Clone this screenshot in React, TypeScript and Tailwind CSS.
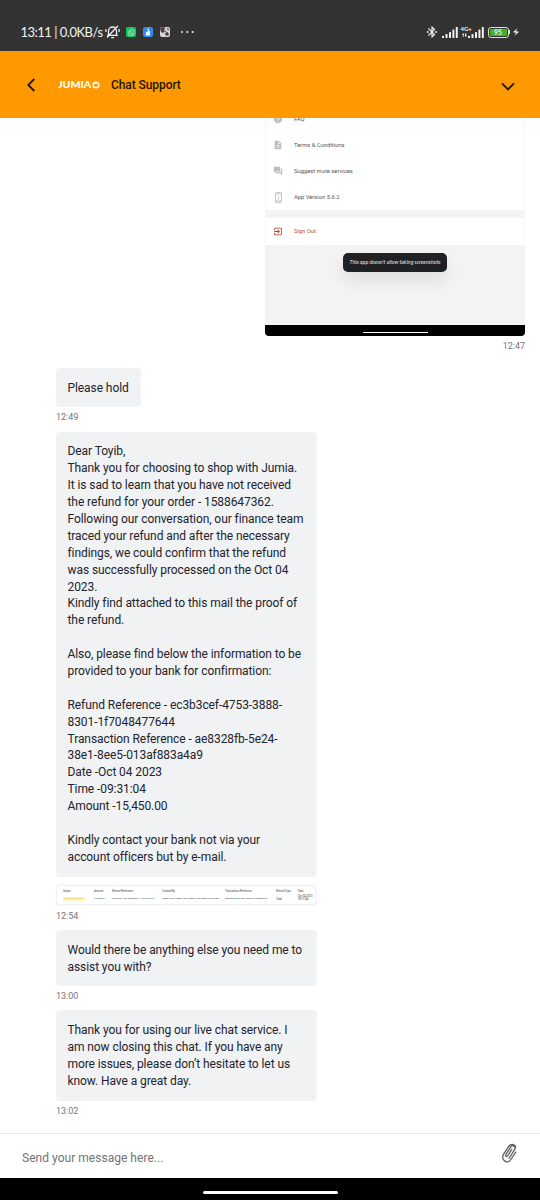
import React from "react";
import { FaWhatsapp } from "react-icons/fa";
import {
  MdBluetoothConnected,
  MdDescription,
  MdElectricBolt,
  MdExitToApp,
  MdHelp,
  MdQuestionAnswer,
} from "react-icons/md";

const LONG_MESSAGE = [
  "Dear Toyib,",
  "Thank you for choosing to shop with Jumia.",
  "It is sad to learn that you have not received",
  "the refund for your order - 1588647362.",
  "Following our conversation, our finance team",
  "traced your refund and after the necessary",
  "findings, we could confirm that the refund",
  "was successfully processed on the Oct 04",
  "2023.",
  "Kindly find attached to this mail the proof of",
  "the refund.",
  "",
  "Also, please find below the information to be",
  "provided to your bank for confirmation:",
  "",
  "Refund Reference - ec3b3cef-4753-3888-",
  "8301-1f7048477644",
  "Transaction Reference - ae8328fb-5e24-",
  "38e1-8ee5-013af883a4a9",
  "Date -Oct 04 2023",
  "Time -09:31:04",
  "Amount -15,450.00",
  "",
  "Kindly contact your bank not via your",
  "account officers but by e-mail.",
];

const SignalBars = () => (
  <svg width="16" height="11" viewBox="0 0 16 11" fill="#f2f2f2">
    <rect x="0" y="8.8" width="2" height="2.2" rx=".5" />
    <rect x="3.5" y="7" width="2" height="4" rx=".5" />
    <rect x="7" y="5" width="2" height="6" rx=".5" />
    <rect x="10.4" y="2.6" width="2" height="8.4" rx=".5" />
    <rect x="13.8" y="0" width="2" height="11" rx=".5" />
  </svg>
);

const MutedBell = () => (
  <svg width="15" height="14" viewBox="0 0 15 14" fill="none" stroke="#eee" strokeWidth="1.3">
    <path d="M3.5 10V6a4 4 0 0 1 8 0v4M2.2 10.4h10.6M6.2 12.7h2.8M13 .8L2 12.5M.9 4v3M14.1 4v3" />
  </svg>
);

const StatusBar = () => (
  <div className="flex h-[51px] shrink-0 items-start bg-[#333333] pl-[20.5px] pr-[20px] pt-[24px] text-[#f2f2f2]">
    <span className="w-[83px] shrink-0 whitespace-nowrap font-[Lato,sans-serif] text-[13px] leading-[17px] tracking-[-0.5px]">
      13:11 | 0.0KB/s
    </span>
    <span className="ml-[1px] mt-[1px] shrink-0">
      <MutedBell />
    </span>
    <span className="ml-[6.5px] mt-[3px] flex h-[10px] w-[10px] items-center justify-center rounded-[2px] bg-[#19c565]">
      <FaWhatsapp size={7} />
    </span>
    <span className="ml-[7px] mt-[3px] flex h-[10px] w-[10px] items-center justify-center rounded-[2px] bg-[#2f8de4]">
      <svg width="6" height="8" viewBox="0 0 6 8" fill="white">
        <path d="M2.7 .3h1v2.6h1.2v4.6H.8V4.6h.9v-.9h1z" />
      </svg>
    </span>
    <span className="ml-[7px] mt-[3px]">
      <svg width="10" height="10" viewBox="0 0 10 10">
        <rect width="10" height="10" rx="2" fill="#d9d6d8" />
        <path d="M0 1l3-1 3 1-2 1 1 2-2 2-2-1zM5 6l3-1 1 3-3 1zM7 1l2 1-1 2z" fill="#493f49" />
        <circle cx="5.5" cy="4.5" r="1" fill="#a56f72" />
      </svg>
    </span>
    <svg className="ml-[11px] mt-[6px]" width="13" height="4" viewBox="0 0 13 4" fill="#eee">
      <circle cx="1" cy="2" r="1" />
      <circle cx="6.3" cy="2" r="1" />
      <circle cx="11.6" cy="2" r="1" />
    </svg>
    <div className="ml-auto flex h-[16px] items-center">
      <MdBluetoothConnected size={14} />
      <span className="ml-[3px] mt-px">
        <SignalBars />
      </span>
      <span className="ml-[3px] mr-[-7px] flex h-[12px] w-[14px] flex-col font-[Lato,sans-serif] text-[6px] font-bold leading-[6px]">
        4G+
        <svg className="ml-[1px] mt-[1px]" width="5" height="4" viewBox="0 0 5 4" fill="#f2f2f2">
          <path d="M0 2l1.2-2 1.2 2zM2.6 2h2.4L3.8 4zM.8 2h.8v2H.8zM3.4 0h.8v2h-.8z" />
        </svg>
      </span>
      <span className="mt-px">
        <SignalBars />
      </span>
      <span className="ml-[4px] flex h-[11px] w-[21px] items-center rounded-[3px] border border-[#d6e9cb] p-[1px]">
        <span className="flex h-full w-full items-center justify-center rounded-[1px] bg-[#4caf1d] font-[Lato,sans-serif] text-[7px] font-bold leading-none">
          95
        </span>
      </span>
      <span className="h-[4px] w-[1.5px] bg-[#d6e9cb]" />
      <MdElectricBolt size={8} className="ml-[2px]" />
    </div>
  </div>
);

const Header = () => (
  <header className="flex h-[67px] shrink-0 items-center bg-[#ff9900] pl-[27px] pr-[25px]">
    <svg width="9" height="14" viewBox="0 0 9 14" fill="none" stroke="#251603" strokeWidth="1.8">
      <path d="M7.3 1L1.3 7l6 6" />
    </svg>
    <span className="ml-[22px] flex h-[12px] w-[42px] items-center text-white">
      <span className="w-[33.5px] origin-left scale-x-[1.18] font-[Lato,sans-serif] text-[9px] font-black leading-none">
        JUMIA
      </span>
      <svg className="shrink-0" width="8" height="8" viewBox="0 0 8 8" fill="none" stroke="white">
        <circle cx="4" cy="4" r="2.8" strokeWidth="1.5" />
        <path d="M2.8 2.3h2.4" strokeWidth="1" />
      </svg>
    </span>
    <h1 className="ml-[11px] font-[Roboto,sans-serif] text-[12px] font-medium tracking-[-0.08px] text-[#251603]">
      Chat Support
    </h1>
    <svg className="ml-auto mt-[3px]" width="14" height="9" viewBox="0 0 14 9" fill="none" stroke="#251603" strokeWidth="1.9">
      <path d="M1 1.3l6 6 6-6" />
    </svg>
  </header>
);

const MenuRow = ({ icon, label, red }: { icon: React.ReactNode; label: string; red?: boolean }) => (
  <div className={`flex h-[26px] shrink-0 items-center pl-[7px] ${red ? "text-[#b73a35]" : "text-[#bdbdc0]"}`}>
    <span className="flex w-[10px] justify-center">{icon}</span>
    <span className={`ml-[11px] text-[5.8px] ${red ? "text-[#c04a48]" : "text-[#55555a]"}`}>{label}</span>
  </div>
);

const PhoneIcon = () => (
  <svg width="7" height="11" viewBox="0 0 7 11" fill="none" stroke="#bdbdc0" strokeWidth=".9">
    <rect x=".5" y=".5" width="6" height="10" rx="1" />
    <path d="M.5 2h6M.5 9h6M3.5 4v1M3.5 5.5v2" />
  </svg>
);

const SharedImage = () => (
  <div className="flex h-[218px] w-[260px] shrink-0 flex-col self-end overflow-hidden rounded-b-[4px] bg-[#f3f3f3]">
    <div className="flex h-[92px] shrink-0 flex-col justify-end overflow-hidden border-x border-[#f6f6f6] bg-white">
      <MenuRow icon={<MdHelp size={10} />} label="FAQ" />
      <MenuRow icon={<MdDescription size={10} />} label="Terms & Conditions" />
      <MenuRow icon={<MdQuestionAnswer size={10} />} label="Suggest more services" />
      <MenuRow icon={<PhoneIcon />} label="App Version 5.6.2" />
    </div>
    <div className="mt-[8px] border-x border-[#f6f6f6] bg-white pb-[1px]">
      <MenuRow icon={<MdExitToApp size={11} />} label="Sign Out" red />
    </div>
    <div className="mt-[8px] flex h-[19px] w-[104px] items-center justify-center self-center whitespace-nowrap rounded-[5px] bg-[#202124] font-[Lato,sans-serif] text-[5.35px] italic text-[#e4e4e4] shadow-[0_8px_16px_rgba(0,0,0,0.09)]">
      This app doesn't allow taking screenshots
    </div>
    <div className="mt-auto flex h-[11px] items-center justify-center bg-black pt-[4px]">
      <div className="h-[1.5px] w-[65px] bg-white" />
    </div>
  </div>
);

const Bubble = ({ lines, wide }: { lines: string[]; wide?: boolean }) => (
  <div
    className={`rounded-[4px] bg-[#f1f2f4] pb-[11px] pl-[11.5px] pt-[11.5px] text-[12px] leading-[16.9px] tracking-[-0.08px] text-[#22232c] ${wide ? "w-[260.5px]" : "w-[85px]"}`}
  >
    {lines.map((line, i) => (
      <p key={i} className="h-[16.9px] whitespace-nowrap">
        {line}
      </p>
    ))}
  </div>
);

const Time = ({ children }: { children: string }) => (
  <time className="h-[12px] text-[9px] leading-[12px] tracking-[-0.05px] text-[#75757a]">{children}</time>
);

const RefundTable = () => (
  <div className="mt-[8px] flex h-[20px] w-[260px] shrink-0 rounded-[3px] border border-[#f0f1f3] bg-white pt-[3.5px] text-[2.7px] leading-[4px] text-[#3c3c41] shadow-[0_0_2px_#eeeeef]">
    <div className="w-[37px] pl-[6px]">
      <p>Status</p>
      <p className="mt-[4px] w-[22px] bg-[#fff4c8] text-center text-[2.3px] text-[#d9a72d]">Refund Processed</p>
    </div>
    <div className="w-[18px]">
      <p>Amount</p>
      <p className="mt-[4px] text-[2.4px]">15,450.00</p>
    </div>
    <div className="w-[50px] whitespace-nowrap">
      <p>Refund Reference</p>
      <p className="mt-[4px] text-[2.3px]">ec3b3cef-4753-3888-8301-1f7048477644</p>
    </div>
    <div className="w-[63px] whitespace-nowrap">
      <p>Created By</p>
      <p className="mt-[4px] text-[2.3px]">15886473621588647362158864736215886473621588</p>
    </div>
    <div className="w-[51px] whitespace-nowrap">
      <p>Transaction Reference</p>
      <p className="mt-[4px] text-[2.3px]">ae8328fb-5e24-38e1-8ee5-013af883a4a9</p>
    </div>
    <div className="w-[22px] whitespace-nowrap">
      <p>Refund Type</p>
      <p className="mt-[4px]">Total</p>
    </div>
    <div className="whitespace-nowrap">
      <p>Date</p>
      <p className="mt-[2px] leading-[3px]">Oct 04 2023</p>
      <p className="leading-[3px]">09:31:04</p>
    </div>
  </div>
);

const Composer = () => (
  <footer className="flex h-[45px] shrink-0 items-center border-t-[1.5px] border-[#e7e7e9] px-[22px]">
    <span className="mt-[4px] text-[12px] tracking-[0.03px] text-[#727278]">Send your message here...</span>
    <svg
      className="ml-auto mt-[-6px]"
      width="18"
      height="21"
      viewBox="0 0 18 21"
      fill="none"
      stroke="#5f5f66"
      strokeWidth="1.3"
      strokeLinecap="round"
    >
      <path d="M11.8 6.4L7.6 12.8c-.9 1.4-2.7.2-1.8-1.2L10.6 4.2c1.9-2.9 5.9-.4 4 2.5L9 15.3M8.4 3.8L3.3 11.6M8.4 3.8c2.6-4 8.6-2.2 6.8 1.7M15.8 9.2L10.6 17c-3 4.5-9.6.3-7.3-5.4" />
    </svg>
  </footer>
);

const App = () => {
  return (
    <div className="flex h-[1200px] w-[540px] flex-col overflow-hidden bg-white font-[Roboto,sans-serif]">
      <StatusBar />
      <Header />
      <main className="flex h-[1015px] shrink-0 flex-col overflow-hidden pl-[56px] pr-[15px]">
        <SharedImage />
        <div className="mt-[4px] flex justify-end">
          <Time>12:47</Time>
        </div>
        <div className="mt-[16px] flex flex-col">
          <Bubble lines={["Please hold"]} />
          <div className="mt-[4px] flex">
            <Time>12:49</Time>
          </div>
        </div>
        <div className="mt-[8.5px] flex flex-col">
          <Bubble lines={LONG_MESSAGE} wide />
          <RefundTable />
          <div className="mt-[5px] flex">
            <Time>12:54</Time>
          </div>
        </div>
        <div className="mt-[8.5px] flex flex-col">
          <Bubble lines={["Would there be anything else you need me to", "assist you with?"]} wide />
          <div className="mt-[4px] flex">
            <Time>13:00</Time>
          </div>
        </div>
        <div className="mt-[8px] flex flex-col">
          <Bubble
            lines={[
              "Thank you for using our live chat service. I",
              "am now closing this chat. If you have any",
              "more issues, please don’t hesitate to let us",
              "know. Have a great day.",
            ]}
            wide
          />
          <div className="mt-[4px] flex">
            <Time>13:02</Time>
          </div>
        </div>
      </main>
      <Composer />
      <div className="flex h-[22px] shrink-0 items-center justify-center bg-black pt-[7px]">
        <div className="h-[3px] w-[135px] rounded-full bg-white" />
      </div>
    </div>
  );
};

export default App;
